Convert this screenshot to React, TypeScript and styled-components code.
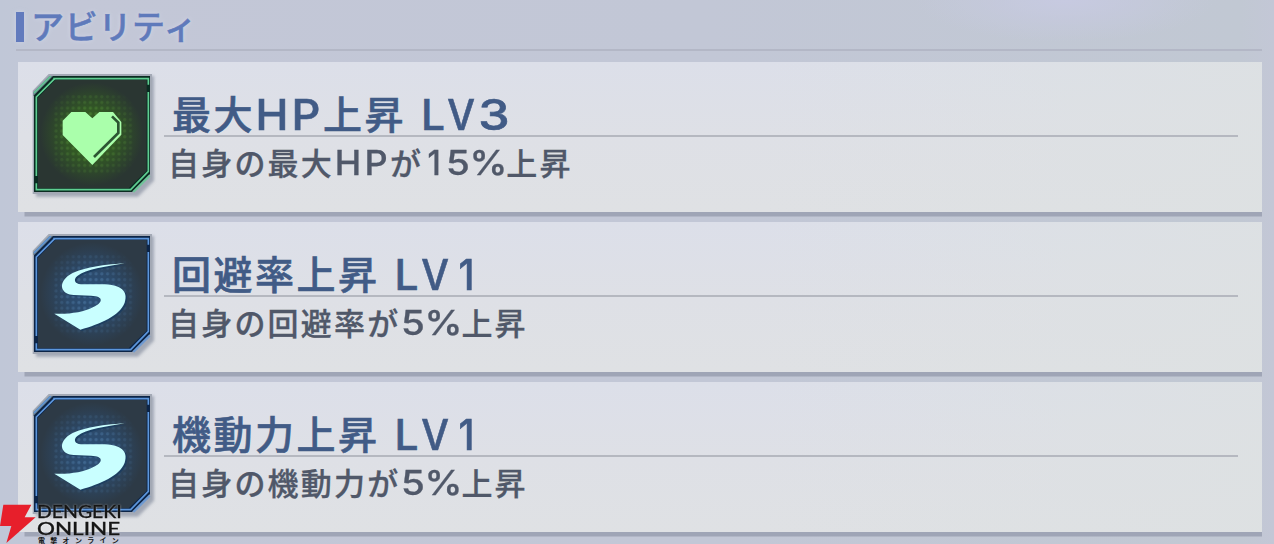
import styled, { createGlobalStyle } from 'styled-components';

const GlobalStyle = createGlobalStyle`
    body {
        margin: 0;
        overflow: hidden;
        font-family: "Noto Sans CJK JP", sans-serif;
    }
`

const Screen = styled.main`
    position: relative;
    box-sizing: border-box;
    width: 1274px;
    height: 544px;
    overflow: hidden;
    padding: 0 12px 0 16px;
    background:
        radial-gradient(ellipse 150px 42px at 1065px 0, #c7cae1 0%, rgba(199, 202, 225, 0) 100%),
        linear-gradient(90deg, #c0c7d7 0, #c3c7d7 60px, #c2c7d6 700px, #c1c8d3 1240px, #c3c7d6 1274px);
`

const Header = styled.header`
    display: flex;
    align-items: flex-start;
    box-sizing: border-box;
    height: 51px;
    padding-top: 12px;
    border-bottom: 2px solid #b3b7c6;
`

const Marker = styled.span`
    width: 8px;
    height: 30px;
    background: #617abd;
    box-shadow: 0 0 5px rgba(208, 214, 236, 0.7);
`

const Heading = styled.h1`
    margin: 0 0 0 7px;
    color: #5f7abb;
    font-size: 33px;
    font-weight: 500;
    line-height: 27px;
    letter-spacing: 0.7px;
    text-shadow: 0 0 5px #d3d8ea;
    -webkit-text-stroke: 0.5px #5f7abb;
`

const List = styled.div`
    display: flex;
    flex-direction: column;
    gap: 10px;
    padding: 11px 0 0 2px;
`

const Card = styled.section`
    display: flex;
    box-sizing: border-box;
    width: 1244px;
    height: 150px;
    padding: 2px 24px 0 2px;
    background:
        linear-gradient(90deg, rgba(221, 225, 226, 0) 60%, rgba(221, 225, 226, 0.8) 100%),
        linear-gradient(180deg, #dcdfe9 0%, #dee0e6 50%, #dfe1e4 100%);
    box-shadow: 6px 5px 0 -0.5px #9fa5b6;
    clip-path: inset(0 0 -7px 0);
`

const Icon = styled.svg`
    flex: none;
    width: 150px;
    height: 140px;
`

const Info = styled.div`
    flex: 1;
    margin-left: -6px;
`

const Name = styled.h2`
    display: flex;
    align-items: flex-start;
    box-sizing: border-box;
    height: 73px;
    margin: 0;
    padding: 22px 0 0 8px;
    border-bottom: 2px solid #b5b8c0;
    color: #415b86;
    font-size: 39px;
    font-weight: 500;
    white-space: pre;
    -webkit-text-stroke: 0.6px #415b86;
`

const Effect = styled.p`
    display: flex;
    align-items: flex-start;
    margin: 0;
    padding: 4px 0 0 4px;
    color: #505869;
    font-size: 31px;
    font-weight: 500;
    white-space: pre;
    -webkit-text-stroke: 0.3px #505869;
`

const Kanji = styled.span<{ $gap: number; $line: number }>`
    letter-spacing: ${({ $gap }) => $gap}px;
    line-height: ${({ $line }) => $line}px;
`

const Glyph = styled.span<{ $w: number; $size: number; $stretch: number; $line: number }>`
    display: block;
    width: ${({ $w }) => $w}px;
    font-family: Inter, sans-serif;
    font-size: ${({ $size }) => $size}px;
    font-weight: 500;
    line-height: ${({ $line }) => $line}px;
    text-align: center;
    transform: scaleX(${({ $stretch }) => $stretch});
`

const Watermark = styled.div`
    position: absolute;
    left: 0;
    bottom: 0;
    display: flex;
    height: 41px;
`

const Bolt = styled.svg`
    width: 37px;
    height: 41px;
`

const Brand = styled.div`
    display: flex;
    flex-direction: column;
    align-items: flex-start;
    color: #161616;
    font-family: Lato, sans-serif;
    white-space: nowrap;
`

const BrandLine = styled.span<{ $size: number; $stretch: number; $height: number }>`
    font-size: ${({ $size }) => $size}px;
    font-weight: 500;
    line-height: ${({ $height }) => $height}px;
    text-shadow: 0 0 2px rgba(255, 255, 255, 0.8);
    -webkit-text-stroke: 0.3px #161616;
    transform: scaleX(${({ $stretch }) => $stretch});
    transform-origin: left;
`

const BrandSub = styled.span`
    padding-left: 1px;
    font-family: "Noto Sans CJK JP", sans-serif;
    font-size: 7px;
    font-weight: 700;
    letter-spacing: 5.3px;
    line-height: 7px;
`

type Kind = 'hp' | 'speed';

const tones = {
    hp: { base: '#2a3632', glow: '#35651f', dot: '#5b9a3c', line: '#5fce91', edge: '#0b2c22' },
    speed: { base: '#2d3a46', glow: '#2c5078', dot: '#5280ab', line: '#5c96dc', edge: '#0d2547' },
}

// advance width and horizontal stretch of each latin glyph: [name, effect]
const glyphs: Record<string, [number, number][]> = {
    H: [[34, 1.04], [28, 1.06]],
    P: [[34, 1.06], [28, 1.08]],
    L: [[26, 1], [24, 1]],
    V: [[30, 0.92], [24, 1]],
    '1': [[33, 0.9], [22, 0.95]],
    '3': [[36, 1.18], [24, 1]],
    '5': [[35, 1.1], [26, 1.15]],
    '%': [[35, 1], [35, 1.14]],
    ' ': [[14, 1], [10, 1]],
}

function Runs({ text, small }: { text: string; small?: boolean }) {
    const parts = text.match(/[A-Z0-9% ]|[^A-Z0-9% ]+/g) || [];
    return (
        <>
            {parts.map((part, i) => {
                const cell = glyphs[part];
                if (!cell) return <Kanji key={i} $gap={small ? 2.2 : 2.5} $line={small ? 41 : 52}>{part}</Kanji>;
                const [w, stretch] = cell[small ? 1 : 0];
                return <Glyph key={i} $w={w} $stretch={stretch} $size={small ? 33.5 : 42.5} $line={small ? 44 : 57}>{part}</Glyph>;
            })}
        </>
    );
}

function AbilityIcon({ kind, id }: { kind: Kind; id: string }) {
    const t = tones[kind];
    return (
        <Icon viewBox="0 0 450 420">
            <defs>
                <radialGradient id={`${id}-glow`}>
                    <stop offset="0" stopColor={t.glow} />
                    <stop offset="0.45" stopColor={t.glow} stopOpacity="0.75" />
                    <stop offset="1" stopColor={t.glow} stopOpacity="0" />
                </radialGradient>
                <radialGradient id={`${id}-fade`}>
                    <stop offset="0.3" stopColor="#fff" />
                    <stop offset="1" stopColor="#000" />
                </radialGradient>
                <pattern id={`${id}-dots`} x="100" y="90" width="17.2" height="17.2" patternUnits="userSpaceOnUse">
                    <circle cx="8" cy="8" r="5" fill={t.dot} />
                </pattern>
                <mask id={`${id}-mask`}>
                    <circle cx="215" cy="210" r="155" fill={`url(#${id}-fade)`} />
                </mask>
                <filter id={`${id}-soft`} x="-20%" y="-20%" width="140%" height="140%">
                    <feGaussianBlur stdDeviation="4" />
                </filter>
            </defs>
            <path d="M48 82L96 36H402V350L354 398H48Z" fill="#8f96a6" opacity="0.75" filter={`url(#${id}-soft)`} />
            <path d="M38 80L86 30H396V340L347 390H38Z" fill="#a3a9b5" />
            <path d="M40 84L88 36H104L48 93H40Z" fill="#6f8391" />
            <path d="M42 94L99 36H390V330L336 384H42Z" fill={t.edge} />
            <path d="M54 101L106 48H380V320L326 373H54Z" fill={t.base} />
            <circle cx="215" cy="210" r="155" fill={`url(#${id}-glow)`} />
            <rect x="100" y="90" width="240" height="240" fill={`url(#${id}-dots)`} mask={`url(#${id}-mask)`} opacity="0.5" />
            <g fill="none" stroke={t.line} strokeWidth="5">
                <path d="M100 44H385V62" />
                <path d="M385 84V322L332 377H49V358" />
                <path d="M49 336V99L104 44" />
                <path d="M42 87L92 37" strokeWidth="4" />
                <path d="M389 335L340 384" strokeWidth="7" opacity="0.75" />
            </g>
            {kind === 'hp' ? (
                <>
                    <path d="M154 144H196L217 163L238 144H279L304 174V212L217 303L128 213V170Z" fill="#aaffab" />
                    <path d="M276 157L295 176V207L222 279" fill="none" stroke="#2c5632" strokeWidth="8" />
                </>
            ) : (
                <>
                    <path d="M319 122C250 126 170 138 143 165C119 189 133 215 166 217L218 219C257 220 250 240 225 253C195 269 153 275 108 273L185 321C247 303 303 280 319 240C331 205 306 187 260 185L188 181C169 180 164 170 177 160C204 140 260 132 319 122Z" fill="#193c60" opacity="0.8" />
                    <path d="M314 118C245 122 165 134 138 161C114 185 128 211 161 213L213 215C252 216 250 236 220 249C190 265 148 271 103 269L181 317C243 299 298 276 314 236C326 201 301 183 255 181L183 181C164 180 159 166 172 156C199 136 255 128 314 118Z" fill="#c9ffff" />
                </>
            )}
        </Icon>
    );
}

const abilities: { name: string; effect: string; kind: Kind }[] = [
    { name: '最大HP上昇 LV3', effect: '自身の最大HPが15%上昇', kind: 'hp' },
    { name: '回避率上昇 LV1', effect: '自身の回避率が5%上昇', kind: 'speed' },
    { name: '機動力上昇 LV1', effect: '自身の機動力が5%上昇', kind: 'speed' },
]

export default function App() {
  return (
    <Screen>
        <GlobalStyle />
        <Header>
            <Marker />
            <Heading>アビリティ</Heading>
        </Header>
        <List>
            {abilities.map((ability, i) => (
                <Card key={ability.name}>
                    <AbilityIcon kind={ability.kind} id={`ability-${i}`} />
                    <Info>
                        <Name><Runs text={ability.name} /></Name>
                        <Effect><Runs text={ability.effect} small /></Effect>
                    </Info>
                </Card>
            ))}
        </List>
        <Watermark>
            <Bolt viewBox="0 0 111 123">
                <path d="M10 5H94L74 43H107L19 120L34 69H0Z" fill="#e71f2b" />
            </Bolt>
            <Brand>
                <BrandLine $size={18} $stretch={1.08} $height={17}>DENGEKI</BrandLine>
                <BrandLine $size={17.5} $stretch={1.28} $height={17}>ONLINE</BrandLine>
                <BrandSub>電撃オンライン</BrandSub>
            </Brand>
        </Watermark>
    </Screen>
  );
}
